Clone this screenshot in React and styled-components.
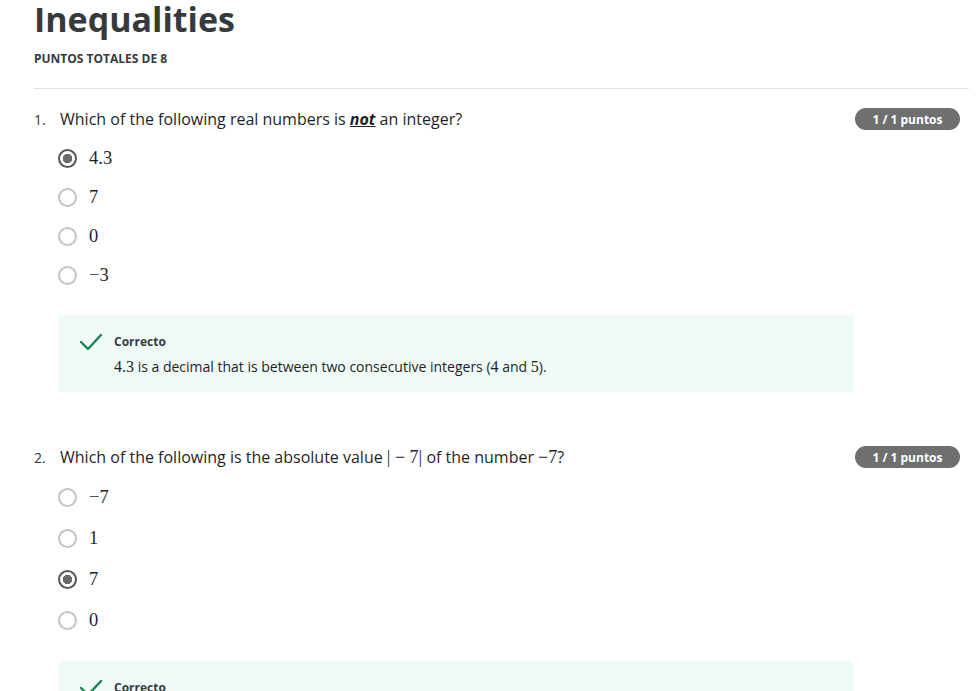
import React from "react"
import styled, { createGlobalStyle } from "styled-components"

const GlobalStyle = createGlobalStyle`
  html, body {
    margin: 0;
    padding: 0;
    background: #ffffff;
  }
  body {
    font-family: "Open Sans", "Liberation Sans", sans-serif;
    color: #1f1f1f;
  }
`

const questions = [
  {
    id: 1,
    text: (
      <>
        Which of the following real numbers is <Emph>not</Emph> an integer?
      </>
    ),
    options: ["4.3", "7", "0", "\u22123"],
    selected: 0,
    rowHeight: 39,
    score: "1 / 1 puntos",
    feedback: (
      <>
        <Math>4.3</Math> is a decimal that is between two consecutive integers (
        <Math>4</Math> and <Math>5</Math>).
      </>
    ),
  },
  {
    id: 2,
    text: (
      <>
        Which of the following is the absolute value{" "}
        <Math>|&#8197;&minus;&#8197;7|</Math> of the number <Math>&minus;7</Math>?
      </>
    ),
    options: ["\u22127", "1", "7", "0"],
    selected: 2,
    rowHeight: 41,
    score: "1 / 1 puntos",
    feedback: null,
  },
]

function Emph({ children }) {
  return <EmphText>{children}</EmphText>
}

function Math({ children }) {
  return <MathText>{children}</MathText>
}

const CheckIcon = () => (
  <svg width="24" height="20" viewBox="0 0 24 20" fill="none">
    <polyline
      points="2,10 9,17 22,3"
      stroke="#1f8354"
      strokeWidth="2.4"
      strokeLinecap="round"
      strokeLinejoin="round"
    />
  </svg>
)

const Question = ({ q }) => (
  <QuestionBlock>
    <QuestionHeader>
      <QNumber>{q.id}.</QNumber>
      <QText>{q.text}</QText>
      <ScoreBadge>{q.score}</ScoreBadge>
    </QuestionHeader>
    <OptionList>
      {q.options.map((opt, i) => (
        <OptionRow key={i} $height={q.rowHeight}>
          <Radio $checked={i === q.selected} />
          <OptionText>{opt}</OptionText>
        </OptionRow>
      ))}
    </OptionList>
    <Feedback>
      <CheckIcon />
      <FeedbackBody>
        <FeedbackTitle>Correcto</FeedbackTitle>
        {q.feedback && <FeedbackText>{q.feedback}</FeedbackText>}
      </FeedbackBody>
    </Feedback>
  </QuestionBlock>
)

const App = () => (
  <>
    <GlobalStyle />
    <Page>
      <Title>Inequalities</Title>
      <Subtitle>Puntos totales de 8</Subtitle>
      <Divider />
      {questions.map(q => (
        <Question key={q.id} q={q} />
      ))}
    </Page>
  </>
)

export default App

const Page = styled.div`
  width: 935px;
  padding: 0 0 0 34px;
  overflow: hidden;
  height: 691px;
`

const Title = styled.h1`
  margin: 0;
  font-size: 34px;
  line-height: 38px;
  font-weight: 700;
  color: #373a3c;
`

const Subtitle = styled.div`
  margin-top: 13px;
  font-size: 12px;
  line-height: 16px;
  font-weight: 700;
  text-transform: uppercase;
  color: #373a3c;
`

const Divider = styled.hr`
  margin: 21px 0 0;
  border: 0;
  border-top: 1px solid #e1e1e1;
`

const QuestionBlock = styled.section`
  margin-top: 18px;

  & + & {
    margin-top: 53px;
  }
`

const QuestionHeader = styled.div`
  display: flex;
  align-items: center;
  height: 24px;
  padding-right: 9px;
`

const QNumber = styled.span`
  width: 26px;
  font-size: 14px;
  color: #333;
`

const QText = styled.span`
  flex: 1;
  font-size: 16px;
  color: #1f1f1f;
`

const EmphText = styled.span`
  font-weight: 700;
  font-style: italic;
  text-decoration: underline;
`

const MathText = styled.span`
  font-family: "Liberation Serif", "DejaVu Serif", serif;
  font-size: 18px;
  color: #1f1f1f;
`

const OptionText = styled(MathText)`
  font-size: 18.5px;
`

const ScoreBadge = styled.span`
  display: inline-flex;
  align-items: center;
  justify-content: center;
  width: 105px;
  height: 22px;
  border-radius: 11px;
  background: #6f6f6f;
  color: #fff;
  font-size: 12px;
  font-weight: 700;
`

const OptionList = styled.div`
  display: flex;
  flex-direction: column;
  margin-top: 8px;
  padding-left: 24px;
`

const OptionRow = styled.label`
  display: flex;
  align-items: center;
  gap: 12px;
  height: ${p => p.$height}px;
`

const Radio = styled.span`
  box-sizing: border-box;
  flex: none;
  width: 19px;
  height: 19px;
  border-radius: 50%;
  border: ${p => (p.$checked ? "2px solid #555" : "2px solid #c4c4c4")};
  background: ${p =>
    p.$checked ? "radial-gradient(circle, #6a6a6a 0 4.5px, #fff 5px)" : "#fff"};
`

const Feedback = styled.div`
  display: flex;
  align-items: flex-start;
  gap: 11px;
  width: 795px;
  box-sizing: border-box;
  margin: 20px 0 0 25px;
  padding: 17px 20px 15px 20px;
  background: #f0faf6;
`

const FeedbackBody = styled.div`
  display: flex;
  flex-direction: column;
  gap: 5px;
`

const FeedbackTitle = styled.div`
  font-size: 12px;
  line-height: 20px;
  font-weight: 700;
  color: #373a3c;
`

const FeedbackText = styled.div`
  font-size: 14px;
  line-height: 20px;
  color: #1f1f1f;

  ${MathText} {
    font-size: 16px;
  }
`
